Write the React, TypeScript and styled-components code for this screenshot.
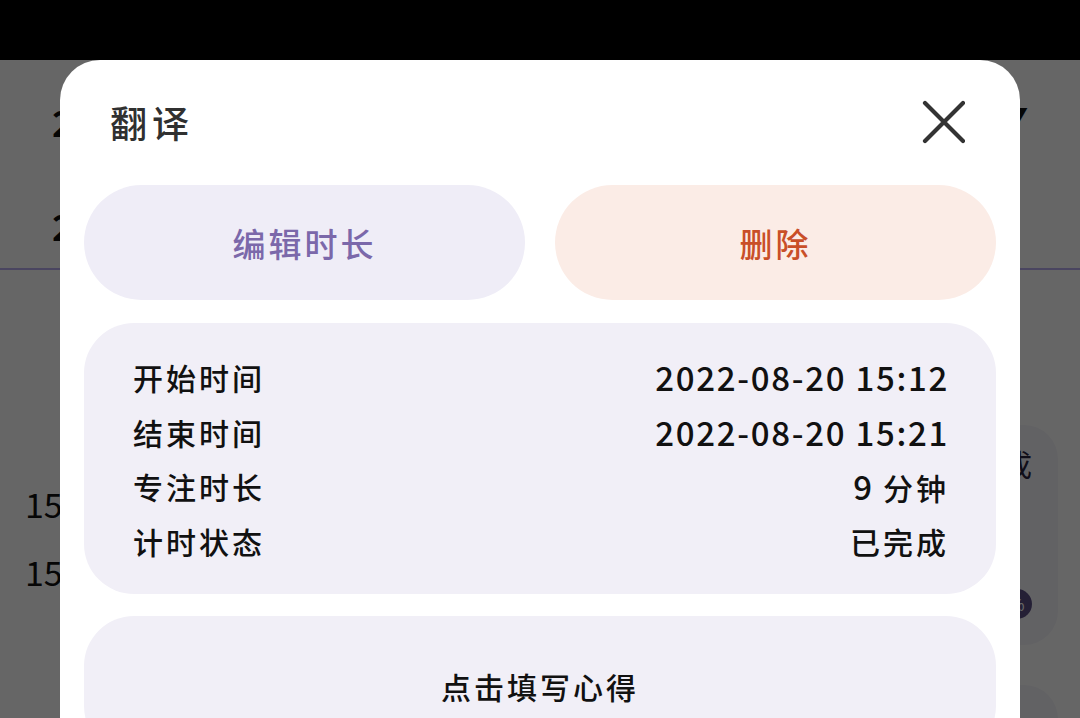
import styled, { createGlobalStyle } from "styled-components";

const GlobalStyle = createGlobalStyle`
  html, body {
    margin: 0;
    padding: 0;
    background: #000;
  }
  body {
    font-family: "Noto Sans CJK SC", "Noto Sans", sans-serif;
  }
`;

const Screen = styled.div`
  position: relative;
  width: 1080px;
  height: 718px;
  overflow: hidden;
  display: flex;
  flex-direction: column;
`;

const StatusBar = styled.div`
  height: 60px;
  flex-shrink: 0;
  background: #000;
`;

/* page underneath the sheet */
const Page = styled.div`
  position: relative;
  flex: 1;
  background: #fff;
  display: flex;
  flex-direction: column;
`;

const HeadRow = styled.div<{ $h: number }>`
  display: flex;
  justify-content: space-between;
  align-items: center;
  height: ${(p) => p.$h}px;
  padding: 0 52px;
  font-size: 36px;
  font-weight: 700;
  color: #111;
`;

const Caret = styled.span`
  font-size: 22px;
  color: #111;
  margin-top: -14px;
`;

const Divider = styled.div`
  height: 2px;
  background: #b9acf0;
`;

const Timeline = styled.div`
  display: flex;
  flex-direction: column;
  gap: 40px;
  padding: 155px 22px 0 25px;
`;

const Entry = styled.div`
  display: grid;
  grid-template-columns: 110px 1fr;
`;

const TimeCol = styled.div`
  display: flex;
  flex-direction: column;
  gap: 34px;
  padding-top: 62px;
  font-size: 34px;
  color: #111;
  line-height: 34px;
`;

const EntryCard = styled.div`
  height: 220px;
  border-radius: 34px;
  background: #f6f5fb;
  display: flex;
  flex-direction: column;
  align-items: flex-end;
  justify-content: space-between;
  padding: 16px 26px 26px 0;
  box-sizing: border-box;
  font-size: 30px;
  color: #2a2540;
`;

const Badge = styled.span`
  width: 30px;
  height: 30px;
  border-radius: 50%;
  background: #5a4f86;
  color: #fff;
  font-size: 16px;
  display: flex;
  align-items: center;
  justify-content: center;
`;

const Scrim = styled.div`
  position: absolute;
  inset: 0;
  background: rgba(0, 0, 0, 0.6);
`;

/* bottom sheet */
const Sheet = styled.div`
  position: absolute;
  top: 60px;
  left: 60px;
  width: 960px;
  height: 720px;
  background: #fff;
  border-radius: 40px 40px 0 0;
  padding: 40px 24px 0;
  box-sizing: border-box;
  display: flex;
  flex-direction: column;
`;

const Header = styled.div`
  display: flex;
  align-items: center;
  justify-content: space-between;
  height: 44px;
  padding: 0 31px 0 26px;
  margin-bottom: 41px;
`;

const Title = styled.h2`
  margin: 0;
  font-size: 37px;
  font-weight: 500;
  letter-spacing: 5px;
  color: #303030;
`;

const CloseButton = styled.button`
  border: none;
  background: none;
  padding: 0;
  width: 44px;
  height: 44px;
  display: flex;
  cursor: pointer;
`;

const Actions = styled.div`
  display: grid;
  grid-template-columns: 1fr 1fr;
  gap: 30px;
`;

const Pill = styled.button<{ $tone: "edit" | "danger" }>`
  height: 115px;
  border: none;
  border-radius: 58px;
  font-family: inherit;
  font-size: 33px;
  font-weight: 500;
  letter-spacing: 3px;
  background: ${(p) => (p.$tone === "edit" ? "#efedf7" : "#fbece6")};
  color: ${(p) => (p.$tone === "edit" ? "#7b68aa" : "#c94f28")};
  cursor: pointer;
`;

const InfoCard = styled.div`
  margin-top: 23px;
  height: 271px;
  box-sizing: border-box;
  padding: 27px 47px 0 49px;
  border-radius: 50px;
  background: #f1eff7;
`;

const InfoRow = styled.div`
  display: flex;
  justify-content: space-between;
  align-items: center;
  height: 54.5px;
  font-size: 30px;
  font-weight: 500;
  letter-spacing: 3px;
  color: #111;
`;

const Num = styled.span`
  font-size: 33px;
  letter-spacing: 1.7px;
`;

const NoteCard = styled.div`
  margin-top: 22px;
  height: 140px;
  border-radius: 50px;
  background: #f1eff7;
  display: flex;
  justify-content: center;
  padding-top: 48px;
  box-sizing: border-box;
  font-size: 30px;
  font-weight: 500;
  letter-spacing: 3px;
  color: #111;
`;

const rows = [
  { label: "开始时间", num: "2022-08-20 15:12", unit: "" },
  { label: "结束时间", num: "2022-08-20 15:21", unit: "" },
  { label: "专注时长", num: "9 ", unit: "分钟" },
  { label: "计时状态", num: "", unit: "已完成" },
];

export default function App() {
  return (
    <>
      <GlobalStyle />
      <Screen>
        <StatusBar />
        <Page>
          <HeadRow $h={122}>
            <span>20</span>
            <Caret>▼</Caret>
          </HeadRow>
          <HeadRow $h={86}>
            <span>20</span>
          </HeadRow>
          <Divider />
          <Timeline>
            <Entry>
              <TimeCol>
                <span>15:12</span>
                <span>15:21</span>
              </TimeCol>
              <EntryCard>
                <span>完成</span>
                <Badge>%</Badge>
              </EntryCard>
            </Entry>
            <Entry>
              <TimeCol />
              <EntryCard />
            </Entry>
          </Timeline>
          <Scrim />
        </Page>

        <Sheet>
          <Header>
            <Title>翻译</Title>
            <CloseButton aria-label="关闭">
              <svg width="44" height="44" viewBox="0 0 44 44">
                <path
                  d="M4 3 L42 41 M42 3 L4 41"
                  stroke="#333"
                  strokeWidth="4.2"
                  strokeLinecap="round"
                  fill="none"
                />
              </svg>
            </CloseButton>
          </Header>
          <Actions>
            <Pill $tone="edit">编辑时长</Pill>
            <Pill $tone="danger">删除</Pill>
          </Actions>
          <InfoCard>
            {rows.map((r) => (
              <InfoRow key={r.label}>
                <span>{r.label}</span>
                <span>
                  {r.num && <Num>{r.num}</Num>}
                  {r.unit}
                </span>
              </InfoRow>
            ))}
          </InfoCard>
          <NoteCard>点击填写心得</NoteCard>
        </Sheet>
      </Screen>
    </>
  );
}
